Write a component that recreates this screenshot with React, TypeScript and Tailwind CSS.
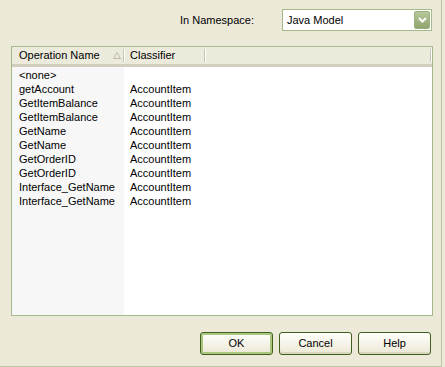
import React from 'react';

// Filas de la lista de operaciones
const rows: [string, string][] = [
  ['<none>', ''],
  ['getAccount', 'AccountItem'],
  ['GetItemBalance', 'AccountItem'],
  ['GetItemBalance', 'AccountItem'],
  ['GetName', 'AccountItem'],
  ['GetName', 'AccountItem'],
  ['GetOrderID', 'AccountItem'],
  ['GetOrderID', 'AccountItem'],
  ['Interface_GetName', 'AccountItem'],
  ['Interface_GetName', 'AccountItem'],
];

const font = { fontFamily: '"Liberation Sans", Arial, sans-serif' };

const Sep = () => (
  <div className="h-[13px] w-[2px] border-l border-[#C7C5B2] border-r border-r-white" />
);

const XpButton = ({ label, primary }: { label: string; primary?: boolean }) => (
  <button
    className={`w-[73px] h-[23px] rounded-[3px] border border-[#3F5F1E] bg-gradient-to-b from-[#FFFFFB] to-[#ECE8D6] text-[11px] text-black flex items-center justify-center ${
      primary ? 'shadow-[inset_0_0_0_2px_#A9C67E]' : 'shadow-[inset_0_-2px_0_#DAD5C0]'
    }`}
  >
    {label}
  </button>
);

export default function App() {
  return (
    <div
      className="w-[445px] h-[367px] bg-[#ECE9D8] text-black text-[11px] leading-none"
      style={font}
    >
      <div className="w-[442px] h-[367px] border-r border-b border-[#BCC8A6] flex flex-col">
        {/* Namespace */}
        <div className="flex items-center pt-[9px] h-[31px]">
          <span className="ml-[180px] w-[102px]">In Namespace:</span>
          <div className="w-[150px] h-[22px] border border-[#A5BA8B] bg-white flex items-center justify-between pl-[4px] pr-[1px]">
            <span>Java Model</span>
            <div className="w-[16px] h-[18px] rounded-[2px] bg-gradient-to-b from-[#B7C79A] to-[#8FA56E] border border-[#9DB081] flex items-center justify-center">
              <svg width="9" height="6" viewBox="0 0 9 6">
                <path d="M1 1 L4.5 4.5 L8 1" stroke="white" strokeWidth="2" fill="none" />
              </svg>
            </div>
          </div>
        </div>

        {/* Lista */}
        <div className="ml-[11px] mt-[15px] w-[422px] h-[270px] border border-[#A5BA8B] bg-white flex flex-col overflow-hidden">
          <div className="h-[20px] bg-[#EBEADB] border-b-[3px] border-[#D2CEBD] flex items-center shrink-0">
            <div className="w-[111px] flex items-center justify-between pl-[7px] pr-[2px]">
              <span>Operation Name</span>
              <svg width="8" height="7" viewBox="0 0 8 7">
                <path d="M0.5 6.5 L4 0.5 L7.5 6.5 Z" fill="none" stroke="#BDBAA8" strokeWidth="1" />
              </svg>
            </div>
            <Sep />
            <span className="w-[79px] pl-[5px]">Classifier</span>
            <Sep />
            <div className="flex-1" />
            <Sep />
          </div>
          <div className="flex flex-1">
            <div className="w-[112px] bg-[#F7F7F7] pl-[7px] pt-[1px]">
              {rows.map(([n], i) => (
                <div key={i} className="h-[14px] flex items-center">{n}</div>
              ))}
            </div>
            <div className="pl-[6px] pt-[1px]">
              {rows.map(([, c], i) => (
                <div key={i} className="h-[14px] flex items-center">{c}</div>
              ))}
            </div>
          </div>
        </div>

        {/* Botones */}
        <div className="flex justify-end gap-[6px] pr-[10px] mt-[16px]">
          <XpButton label="OK" primary />
          <XpButton label="Cancel" />
          <XpButton label="Help" />
        </div>
      </div>
    </div>
  );
}
